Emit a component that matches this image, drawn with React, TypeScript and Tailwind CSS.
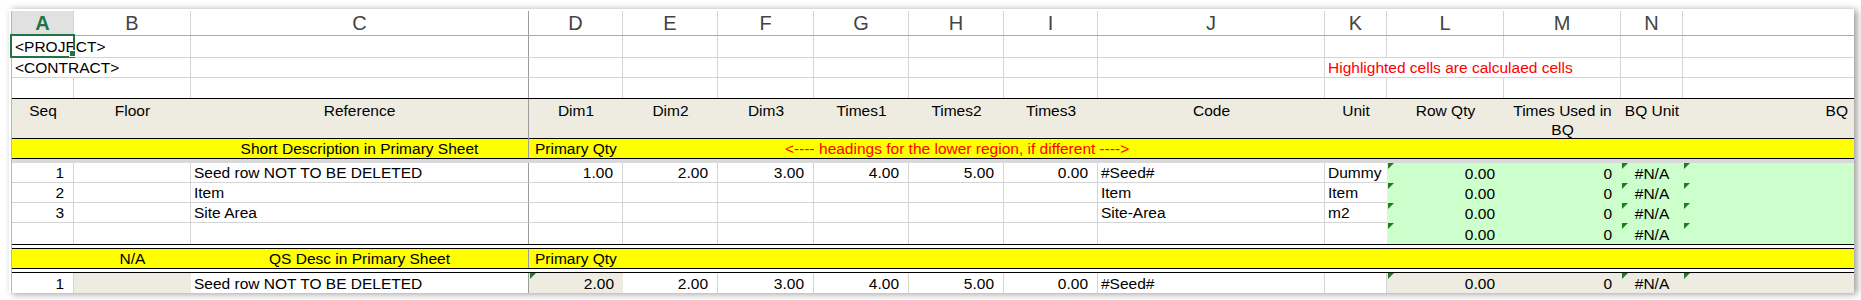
import type { ReactNode } from 'react'

// column widths A..O, taken from the sheet
const GRID =
  'grid grid-cols-[62px_117px_338px_94px_95px_96px_95px_95px_94px_227px_62px_117px_117px_62px_171px]'

const GL = 'border-r border-b border-[#d4d4d4]'
const FZ = 'border-r border-b border-[#d4d4d4] border-r-[#9c9c9c]'
const GL_NB = 'border-r border-[#d4d4d4]'
const FZ_NB = 'border-r border-[#9c9c9c]'

const NUM = 'justify-end pr-[9px]'
const TXT = 'pl-[3px]'
const GREEN = 'bg-[#ccffcc]'
const BEIGE = 'bg-[#eeece1]'

function Cell({ className = '', children }: { className?: string; children?: ReactNode }) {
  return <div className={`relative flex items-end whitespace-nowrap ${className}`}>{children}</div>
}

function Tri() {
  return (
    <span className="absolute left-[1px] top-0 h-0 w-0 border-t-[6px] border-r-[6px] border-t-[#1e7b1e] border-r-transparent" />
  )
}

// the last column has no visible letter in the shot
const letters = ['A', 'B', 'C', 'D', 'E', 'F', 'G', 'H', 'I', 'J', 'K', 'L', 'M', 'N', '']

interface DataRow {
  seq?: string
  desc?: string
  dims?: string[]
  code?: string
  unit?: string
}

const dataRows: DataRow[] = [
  {
    seq: '1',
    desc: 'Seed row NOT TO BE DELETED',
    dims: ['1.00', '2.00', '3.00', '4.00', '5.00', '0.00'],
    code: '#Seed#',
    unit: 'Dummy',
  },
  { seq: '2', desc: 'Item', code: 'Item', unit: 'Item' },
  { seq: '3', desc: 'Site Area', code: 'Site-Area', unit: 'm2' },
  {},
]

const headings = ['Seq', 'Floor', 'Reference', 'Dim1', 'Dim2', 'Dim3', 'Times1', 'Times2', 'Times3', 'Code', 'Unit', 'Row Qty']

function Data({ row, last }: { row: DataRow; last: boolean }) {
  const g = last ? GL_NB : GL
  const f = last ? FZ_NB : FZ
  const dims = row.dims ?? ['', '', '', '', '', '']
  return (
    <div className={`${GRID} ${last ? 'h-[21px]' : 'h-[20px]'}`}>
      <Cell className={`${g} ${NUM}`}>{row.seq}</Cell>
      <Cell className={g} />
      <Cell className={`${f} ${TXT}`}>{row.desc}</Cell>
      {dims.map((d, i) => (
        <Cell key={i} className={`${g} ${NUM}`}>
          {d}
        </Cell>
      ))}
      <Cell className={`${g} ${TXT}`}>{row.code}</Cell>
      <Cell className={`${last ? '' : 'border-b border-[#d4d4d4]'} ${TXT}`}>{row.unit}</Cell>
      <Cell className={`${GREEN} ${NUM}`}>
        <Tri />
        0.00
      </Cell>
      <Cell className={`${GREEN} ${NUM}`}>0</Cell>
      <Cell className={`${GREEN} justify-center`}>
        <Tri />
        #N/A
      </Cell>
      <Cell className={GREEN}>
        <Tri />
      </Cell>
    </div>
  )
}

export default function App() {
  return (
    <div className="min-h-[300px] bg-white pl-[9px] pt-[9px] font-['Liberation_Sans',Arial,sans-serif] text-[15.5px] leading-[18px] text-black">
      <div className="w-fit bg-white pl-[2px] pt-[2px] shadow-[3px_1px_7px_rgba(0,0,0,0.4)]">
        <div className="border-l border-[#b8b8b8]">
          {/* column letters */}
          <div className={`${GRID} h-[25px] border-b border-[#ababab] text-[20px] leading-[24px] text-[#444]`}>
            {letters.map((l, i) => (
              <div
                key={i}
                className={`flex items-center justify-center ${
                  i === 0
                    ? 'bg-[#e1e1e1] font-bold text-[#217346] border-r border-[#d4d4d4]'
                    : i === 2
                      ? 'border-r border-[#9c9c9c]'
                      : i === 14
                        ? ''
                        : 'border-r border-[#d4d4d4]'
                }`}
              >
                {l}
              </div>
            ))}
          </div>

          {/* row 1 */}
          <div className={`${GRID} h-[22px]`}>
            <Cell className={`border-b border-[#d4d4d4] ${TXT} pb-[1px]`}>
              &lt;PROJECT&gt;
              <span className="absolute -left-[2px] -top-[2px] -right-[1px] -bottom-[1px] z-10 border-2 border-[#217346]" />
              <span className="absolute -right-[2px] bottom-0 z-20 h-[7px] w-[7px] border border-white bg-[#217346]" />
            </Cell>
            <Cell className={GL} />
            <Cell className={FZ} />
            <Cell className={GL} />
            <Cell className={GL} />
            <Cell className={GL} />
            <Cell className={GL} />
            <Cell className={GL} />
            <Cell className={GL} />
            <Cell className={GL} />
            <Cell className={GL} />
            <Cell className={GL} />
            <Cell className={GL} />
            <Cell className={GL} />
            <Cell className="border-b border-[#d4d4d4]" />
          </div>

          {/* row 2 */}
          <div className={`${GRID} h-[20px]`}>
            <Cell className={`border-b border-[#d4d4d4] ${TXT}`}>&lt;CONTRACT&gt;</Cell>
            <Cell className={GL} />
            <Cell className={FZ} />
            <Cell className={GL} />
            <Cell className={GL} />
            <Cell className={GL} />
            <Cell className={GL} />
            <Cell className={GL} />
            <Cell className={GL} />
            <Cell className={GL} />
            <Cell className={`border-b border-[#d4d4d4] ${TXT} text-[#ff0000]`}>
              Highlighted cells are calculaed cells
            </Cell>
            <Cell className="border-b border-[#d4d4d4]" />
            <Cell className={GL} />
            <Cell className={GL} />
            <Cell className="border-b border-[#d4d4d4]" />
          </div>

          {/* row 3 */}
          <div className={`${GRID} h-[20px]`}>
            <Cell className={GL_NB} />
            <Cell className={GL_NB} />
            <Cell className={FZ_NB} />
            <Cell className={GL_NB} />
            <Cell className={GL_NB} />
            <Cell className={GL_NB} />
            <Cell className={GL_NB} />
            <Cell className={GL_NB} />
            <Cell className={GL_NB} />
            <Cell className={GL_NB} />
            <Cell className={GL_NB} />
            <Cell className={GL_NB} />
            <Cell className={GL_NB} />
            <Cell className={GL_NB} />
            <Cell />
          </div>

          {/* headings */}
          <div className={`${GRID} h-[41px] border-y border-black ${BEIGE} leading-[19px]`}>
            {headings.map((h, i) => (
              <div
                key={h}
                className={`flex justify-center whitespace-nowrap pt-[2px] ${i === 2 ? 'border-r border-[#9c9c9c]' : ''}`}
              >
                {h}
              </div>
            ))}
            <div className="pt-[2px] text-center">Times Used in BQ</div>
            <div className="flex justify-center whitespace-nowrap pt-[2px]">BQ Unit</div>
            <div className="flex justify-end pr-[6px] pt-[2px]">BQ</div>
          </div>

          {/* upper band */}
          <div className={`${GRID} h-[20px] border-b border-black bg-[#ffff00]`}>
            <Cell />
            <Cell />
            <Cell className={`${FZ_NB} justify-center`}>Short Description in Primary Sheet</Cell>
            <Cell className="pl-[6px]">Primary Qty</Cell>
            <Cell className="col-span-11 pl-[162px] text-[#ff0000]">
              &lt;---- headings for the lower region, if different ----&gt;
            </Cell>
          </div>

          {/* hidden rows */}
          <div className="h-[4px] bg-[#d9d9d9]" />

          {dataRows.map((r, i) => (
            <Data key={i} row={r} last={i === dataRows.length - 1} />
          ))}

          <div className="h-[5px] border-y border-black" />

          {/* lower band */}
          <div className={`${GRID} h-[19px] bg-[#ffff00]`}>
            <Cell />
            <Cell className="justify-center">N/A</Cell>
            <Cell className={`${FZ_NB} justify-center`}>QS Desc in Primary Sheet</Cell>
            <Cell className="pl-[6px]">Primary Qty</Cell>
          </div>

          <div className="h-[5px] border-y border-black" />

          {/* lower seed row */}
          <div className={`${GRID} h-[20px]`}>
            <Cell className={`${GL_NB} ${NUM}`}>1</Cell>
            <Cell className={BEIGE} />
            <Cell className={`${FZ_NB} ${TXT}`}>Seed row NOT TO BE DELETED</Cell>
            <Cell className={`${BEIGE} ${NUM}`}>
              <Tri />
              2.00
            </Cell>
            <Cell className={`${GL_NB} ${NUM}`}>2.00</Cell>
            <Cell className={`${GL_NB} ${NUM}`}>3.00</Cell>
            <Cell className={`${GL_NB} ${NUM}`}>4.00</Cell>
            <Cell className={`${GL_NB} ${NUM}`}>5.00</Cell>
            <Cell className={`${GL_NB} ${NUM}`}>0.00</Cell>
            <Cell className={`${GL_NB} ${TXT}`}>#Seed#</Cell>
            <Cell className={GL_NB} />
            <Cell className={`${BEIGE} ${NUM}`}>
              <Tri />
              0.00
            </Cell>
            <Cell className={`${BEIGE} ${NUM}`}>0</Cell>
            <Cell className={`${BEIGE} justify-center`}>
              <Tri />
              #N/A
            </Cell>
            <Cell className={BEIGE}>
              <Tri />
            </Cell>
          </div>
        </div>
      </div>
    </div>
  )
}
